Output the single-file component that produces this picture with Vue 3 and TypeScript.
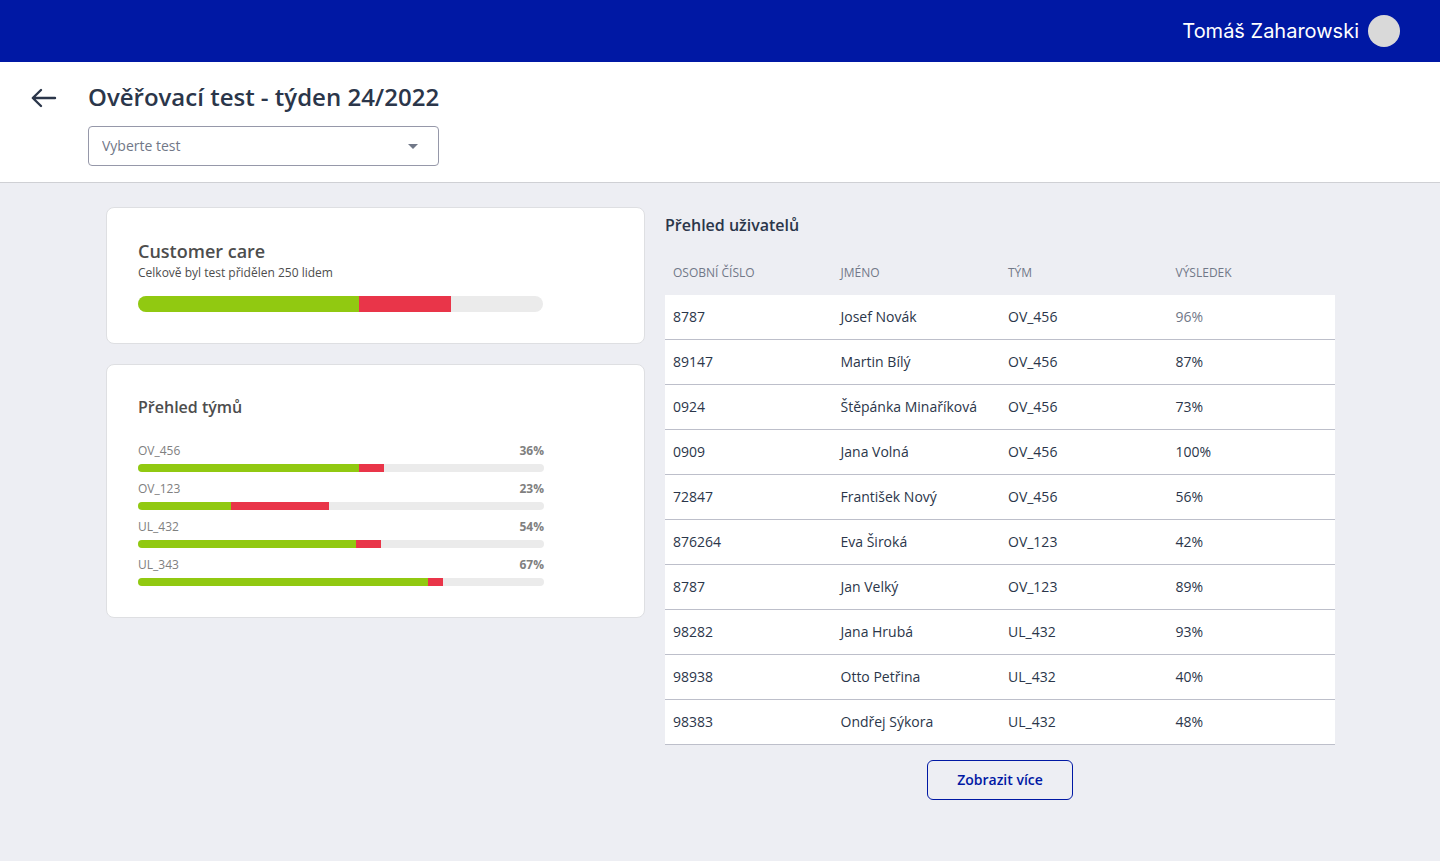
<script setup lang="ts">
import { ref } from 'vue'

interface Team {
  name: string
  score: number
  passed: number
  failed: number
}

interface UserResult {
  id: string
  name: string
  team: string
  result: string
}

const userName = 'Tomáš Zaharowski'
const selectedTest = ref('')
const overall = { passed: 54.6, failed: 22.7 }

const teams: Team[] = [
  { name: 'OV_456', score: 36, passed: 54.4, failed: 6.2 },
  { name: 'OV_123', score: 23, passed: 22.9, failed: 24.1 },
  { name: 'UL_432', score: 54, passed: 53.7, failed: 6.2 },
  { name: 'UL_343', score: 67, passed: 71.4, failed: 3.7 },
]

const users: UserResult[] = [
  { id: '8787', name: 'Josef Novák', team: 'OV_456', result: '96%' },
  { id: '89147', name: 'Martin Bílý', team: 'OV_456', result: '87%' },
  { id: '0924', name: 'Štěpánka Minaříková', team: 'OV_456', result: '73%' },
  { id: '0909', name: 'Jana Volná', team: 'OV_456', result: '100%' },
  { id: '72847', name: 'František Nový', team: 'OV_456', result: '56%' },
  { id: '876264', name: 'Eva Široká', team: 'OV_123', result: '42%' },
  { id: '8787', name: 'Jan Velký', team: 'OV_123', result: '89%' },
  { id: '98282', name: 'Jana Hrubá', team: 'UL_432', result: '93%' },
  { id: '98938', name: 'Otto Petřina', team: 'UL_432', result: '40%' },
  { id: '98383', name: 'Ondřej Sýkora', team: 'UL_432', result: '48%' },
]
</script>

<template>
  <div class="page">
    <header class="topbar">
      <span class="user-name">{{ userName }}</span>
      <span class="avatar"></span>
    </header>

    <section class="heading">
      <button class="back" type="button" aria-label="Zpět">
        <svg width="26" height="20" viewBox="0 0 26 20" fill="none" stroke="currentColor" stroke-width="2.4" stroke-linecap="round" stroke-linejoin="round">
          <path d="M24 10H2M10 2L1.8 10L10 18" />
        </svg>
      </button>
      <div class="heading-body">
        <h1>Ověřovací test - týden 24/2022</h1>
        <div class="select-box">
          <select v-model="selectedTest" aria-label="Vyberte test">
            <option value="">Vyberte test</option>
          </select>
          <svg class="caret" width="10" height="5" viewBox="0 0 10 5" aria-hidden="true">
            <path d="M0 0H10L5 5Z" fill="currentColor" />
          </svg>
        </div>
      </div>
    </section>

    <main class="content">
      <div class="cards">
        <section class="card">
          <h2 class="care-title">Customer care</h2>
          <p class="care-note">Celkově byl test přidělen 250 lidem</p>
          <div class="bar bar-large">
            <span class="passed" :style="{ width: overall.passed + '%' }"></span>
            <span class="failed" :style="{ width: overall.failed + '%' }"></span>
          </div>
        </section>

        <section class="card">
          <h2 class="teams-title">Přehled týmů</h2>
          <ul class="teams">
            <li v-for="team in teams" :key="team.name">
              <div class="team-label">
                <span>{{ team.name }}</span>
                <strong>{{ team.score }}%</strong>
              </div>
              <div class="bar">
                <span class="passed" :style="{ width: team.passed + '%' }"></span>
                <span class="failed" :style="{ width: team.failed + '%' }"></span>
              </div>
            </li>
          </ul>
        </section>
      </div>

      <section class="users">
        <h2 id="users-title">Přehled uživatelů</h2>
        <table aria-labelledby="users-title">
          <thead>
            <tr>
              <th scope="col">OSOBNÍ ČÍSLO</th>
              <th scope="col">JMÉNO</th>
              <th scope="col">TÝM</th>
              <th scope="col">VÝSLEDEK</th>
            </tr>
          </thead>
          <tbody>
            <tr v-for="(user, index) in users" :key="index">
              <td>{{ user.id }}</td>
              <td>{{ user.name }}</td>
              <td>{{ user.team }}</td>
              <td :class="{ muted: index === 0 }">{{ user.result }}</td>
            </tr>
          </tbody>
        </table>
        <button class="more" type="button">Zobrazit více</button>
      </section>
    </main>
  </div>
</template>

<style>
body {
  margin: 0;
  background: #edeef3;
}
</style>

<style scoped>
.page {
  min-height: 100vh;
  background: #edeef3;
  color: #2b364a;
  font-family: "Open Sans", "Noto Sans", sans-serif;
  font-size: 14px;
}

h1,
h2,
p,
ul {
  margin: 0;
  padding: 0;
}

.topbar {
  display: flex;
  align-items: center;
  justify-content: flex-end;
  gap: 9px;
  height: 62px;
  padding: 0 40px;
  background: #0018a4;
}

.user-name {
  color: #fff;
  font-family: Inter, sans-serif;
  font-size: 20px;
}

.avatar {
  width: 32px;
  height: 32px;
  border-radius: 50%;
  background: #d9d9d9;
}

.heading {
  display: flex;
  align-items: flex-start;
  gap: 31px;
  padding: 19px 31px 16px;
  border-bottom: 1px solid #cfd0d4;
  background: #fff;
}

.back {
  display: flex;
  align-items: center;
  height: 34px;
  padding: 0;
  border: 0;
  background: none;
  color: #2b364a;
  cursor: pointer;
}

.heading-body {
  display: flex;
  flex-direction: column;
  gap: 13px;
}

h1 {
  font-size: 24px;
  font-weight: 600;
  line-height: 32px;
}

.select-box {
  position: relative;
}

select {
  display: block;
  width: 100%;
  height: 40px;
  padding: 0 40px 2px 13px;
  border: 1px solid #9698a9;
  border-radius: 4px;
  background: #fff;
  color: #717888;
  font-family: inherit;
  font-size: 14px;
  appearance: none;
}

.caret {
  position: absolute;
  top: 18px;
  right: 21px;
  color: #717888;
  pointer-events: none;
}

.content {
  display: grid;
  grid-template-columns: 539fr 670fr;
  align-items: start;
  gap: 20px;
  padding: 24px 105px 61px 106px;
}

.cards {
  display: flex;
  flex-direction: column;
  gap: 20px;
}

.card {
  padding: 31px 100px 31px 31px;
  border: 1px solid #dedfe2;
  border-radius: 8px;
  background: #fff;
  color: #4d4d4d;
}

.care-title {
  font-size: 18px;
  font-weight: 600;
  line-height: 25px;
}

.care-note {
  margin-bottom: 14px;
  font-size: 12px;
  line-height: 18px;
}

.bar {
  display: flex;
  height: 8px;
  border-radius: 8px;
  background: #ebebeb;
  overflow: hidden;
}

.bar-large {
  height: 16px;
  margin-right: 1px;
}

.passed {
  background: #91c911;
}

.failed {
  background: #e93549;
}

.teams-title {
  margin-bottom: 24px;
  font-size: 16px;
  font-weight: 600;
  line-height: 22px;
}

.teams {
  display: flex;
  flex-direction: column;
  gap: 8px;
  list-style: none;
}

.team-label {
  display: flex;
  justify-content: space-between;
  margin-bottom: 4px;
  color: #808080;
  font-size: 12px;
  line-height: 18px;
}

.users {
  display: flex;
  flex-direction: column;
}

.users h2 {
  padding: 7px 0 20px;
  font-size: 16px;
  font-weight: 600;
  line-height: 22px;
}

table {
  width: 100%;
  table-layout: fixed;
  border-collapse: separate;
  border-spacing: 0;
}

th,
td {
  box-sizing: border-box;
  padding: 0 8px;
  text-align: left;
  font-weight: 400;
}

th {
  height: 39px;
  padding-bottom: 6px;
  color: #717888;
  font-size: 12px;
}

td {
  height: 45px;
  padding-bottom: 2px;
  border-bottom: 1px solid #bdbfca;
  background: #fff;
}

.muted {
  color: #717888;
}

.more {
  align-self: center;
  height: 40px;
  margin-top: 15px;
  padding: 0 29px 2px;
  border: 1px solid #0018a4;
  border-radius: 6px;
  background: none;
  color: #0018a4;
  font-family: inherit;
  font-size: 14px;
  font-weight: 600;
  cursor: pointer;
}
</style>
